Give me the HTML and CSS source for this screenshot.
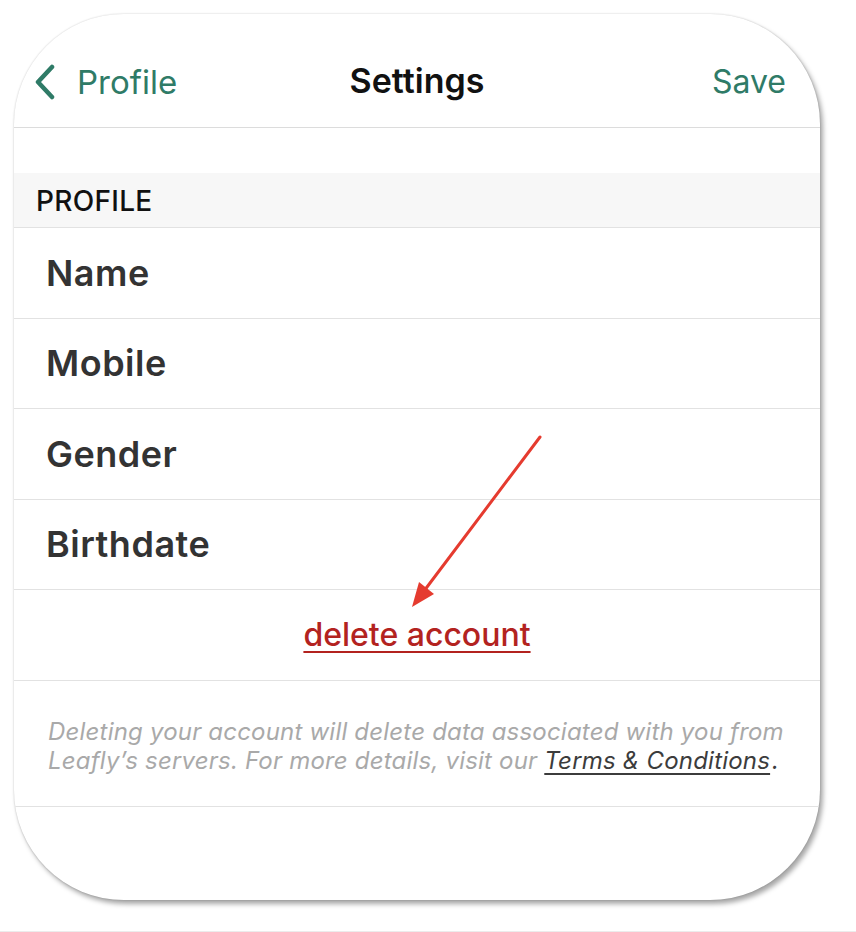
FILE: index.html
```html
<!DOCTYPE html>
<html lang="en">
<head>
    <meta charset="UTF-8">
    <meta name="viewport" content="width=device-width, initial-scale=1.0">
    <title>Settings</title>
    <link rel="stylesheet" href="styles.css">
</head>
<body>
    <div class="page">
        <div class="card">
            <div class="nav">
                <a href="#" class="nav-back">
                    <svg class="nav-chevron" width="22" height="36" viewBox="0 0 22 36">
                        <path d="M18 3 L4 18 L18 33" fill="none" stroke="currentColor" stroke-width="4.5" stroke-linecap="round" stroke-linejoin="round"/>
                    </svg>
                    <span>Profile</span>
                </a>
                <div class="nav-title">Settings</div>
                <a href="#" class="nav-save">Save</a>
            </div>

            <div class="spacer"></div>

            <div class="section-head">PROFILE</div>

            <div class="row">Name</div>
            <div class="row">Mobile</div>
            <div class="row">Gender</div>
            <div class="row">Birthdate</div>
            <div class="row row-center">
                <a href="#" class="delete-link">delete account</a>
            </div>

            <div class="note">
                <p>Deleting your account will delete data associated with you from</p>
                <p>Leafly&rsquo;s servers. For more details, visit our <a href="#">Terms &amp; Conditions</a><span class="dot">.</span></p>
            </div>
        </div>

        <!-- annotation arrow -->
        <svg class="arrow" width="856" height="932" viewBox="0 0 856 932">
            <line x1="540" y1="437" x2="424" y2="591" stroke="#e53b2f" stroke-width="3" stroke-linecap="round"/>
            <polygon points="412,607 419,582 434,594" fill="#e53b2f"/>
        </svg>
    </div>
</body>
</html>
```

FILE: styles.css
```css
* {
    margin: 0;
    padding: 0;
    box-sizing: border-box;
}
body {
    background: #fff;
    font-family: Inter, "Noto Sans", sans-serif;
}
a {
    text-decoration: none;
    color: inherit;
}
.page {
    position: relative;
    width: 856px;
    height: 932px;
    padding: 14px 0 0 14px;
    border-bottom: 1px solid #ececec;
}
.card {
    width: 806px;
    height: 886px;
    background: #fff;
    border-radius: 110px;
    overflow: hidden;
    box-shadow: 3px 4px 5px rgba(0, 0, 0, 0.35), 0 0 2px rgba(0, 0, 0, 0.2);
}

.nav {
    height: 114px;
    border-bottom: 1px solid #dcdcdc;
    display: flex;
    align-items: center;
    justify-content: space-between;
    padding: 22px 34px 0 20px;
    position: relative;
}
.nav-back {
    display: flex;
    align-items: center;
    gap: 21px;
    color: #2f7b67;
    font-size: 33px;
}
.nav-title {
    position: absolute;
    left: 0;
    right: 0;
    top: 46px;
    text-align: center;
    font-size: 34px;
    font-weight: 600;
    color: #111;
    pointer-events: none;
}
.nav-save {
    color: #2f7b67;
    font-size: 32px;
}

.spacer {
    height: 45px;
}
.section-head {
    height: 55px;
    background: #f7f7f7;
    border-bottom: 1px solid #e2e2e2;
    padding: 11px 22px 0;
    font-size: 28px;
    font-weight: 500;
    color: #111;
    letter-spacing: 0.3px;
}

.row {
    height: 90.5px;
    border-bottom: 1px solid #e2e2e2;
    display: flex;
    align-items: center;
    padding: 0 32px;
    font-size: 36px;
    font-weight: 600;
    letter-spacing: 0.5px;
    color: #333;
}
.row-center {
    justify-content: center;
    padding: 0;
    letter-spacing: 0;
}
.delete-link {
    color: #b3231f;
    font-size: 32px;
    font-weight: 500;
    text-decoration: underline;
    text-underline-offset: 5px;
    text-decoration-thickness: 2px;
}

.note {
    height: 126px;
    border-bottom: 1px solid #e2e2e2;
    padding: 36px 20px 0 34px;
    font-size: 24px;
    line-height: 29px;
    letter-spacing: 0.2px;
    font-style: italic;
    color: #a9a9a9;
    white-space: nowrap;
}
.note a {
    color: #3c3c3c;
    text-decoration: underline;
    text-underline-offset: 4px;
}
.note .dot {
    color: #3c3c3c;
    margin-left: 2px;
}

.arrow {
    position: absolute;
    left: 0;
    top: 0;
    pointer-events: none;
}
```
